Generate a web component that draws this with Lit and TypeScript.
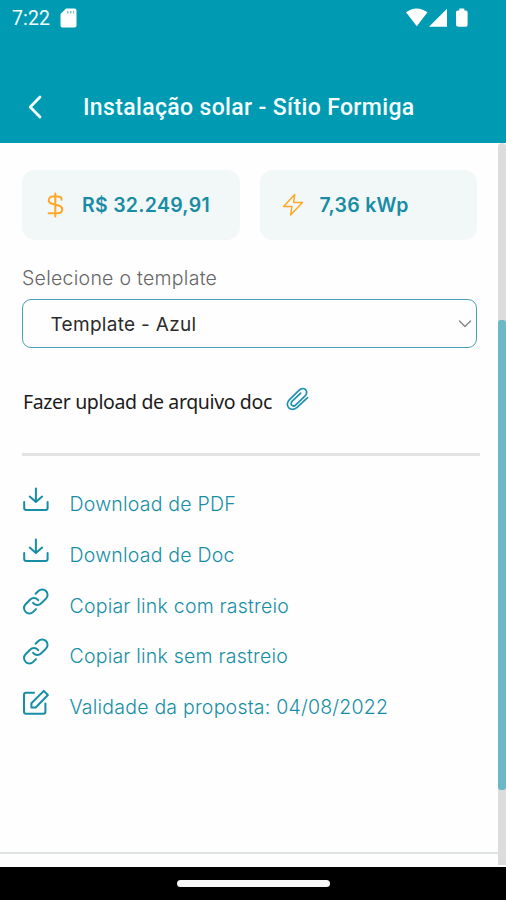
import { LitElement, html, css, svg } from "lit";
import { customElement } from "lit/decorators.js";

const download = svg`<path d="M1.200 15v6a2 2 0 0 0 2 2h19.400a2 2 0 0 0 2-2v-6M12.900 1.500v13.200M6.700 9.600l6.200 5.400 6.200-5.400"/>`;
const link = svg`<path d="M10.1 13.900a5.300 5.300 0 0 0 7.900.6l5-4.900a5.350 5.350 0 0 0-7.600-7.600l-2.800 2.800M15.200 11.100a5.300 5.300 0 0 0-7.900-.6l-4.700 4.800a5.350 5.350 0 0 0 7.600 7.600l2.800-2.800"/>`;
const edit = svg`<path d="M11 2.800H3a2 2 0 0 0-2 2v17a2 2 0 0 0 2 2h17.400a2 2 0 0 0 2-2v-8.400M8.400 13.200v4.300h4.300L24.900 5l-4.100-4.100z"/>`;

const actions = [
  { icon: download, label: "Download de PDF" },
  { icon: download, label: "Download de Doc" },
  { icon: link, label: "Copiar link com rastreio" },
  { icon: link, label: "Copiar link sem rastreio" },
  { icon: edit, label: "Validade da proposta: 04/08/2022" },
];

@customElement("app-root")
export class AppRoot extends LitElement {
  static styles = css`
    :host { display: flex; flex-direction: column; height: 900px; width: 506px; background: #fefefe; font-family: Inter, sans-serif; overflow: hidden; }
    * { box-sizing: border-box; }
    svg { display: block; flex: none; fill: none; stroke: currentColor; stroke-linecap: round; stroke-linejoin: round; overflow: visible; }
    header { flex: none; height: 143px; background: #009bb3; color: #f5ffff; font-family: Roboto, sans-serif; }
    .status { height: 36px; padding: 0 38px 0 12px; display: flex; align-items: center; }
    .time { font-size: 19.5px; width: 48px; letter-spacing: 0.1px; }
    .status svg { fill: #fff; stroke: none; }
    .signals { margin-left: auto; }
    .bar { height: 70px; margin-top: 36px; padding-left: 27px; display: flex; align-items: center; }
    .title { font-size: 23px; font-weight: 500; margin-left: 39px; white-space: nowrap; letter-spacing: 0.35px; }
    .body { flex: 1; display: flex; min-height: 0; }
    main { flex: 1; padding: 27px 0 0 22px; display: flex; flex-direction: column; white-space: nowrap; }
    .cards { display: flex; gap: 20px; }
    .card { width: 217.5px; height: 70px; border-radius: 13px; background: #f2f7f8; display: flex; align-items: center; padding-left: 22px; color: #ffa726; }
    .value { margin-left: 16px; color: #188ca4; font-weight: 600; font-size: 19.5px; letter-spacing: 0.28px; }
    .label { margin-top: 26px; line-height: 24px; font-size: 19.5px; color: #666; font-weight: 300; letter-spacing: 0.27px; }
    .select { margin-top: 9px; width: 455px; height: 49px; border: 1.5px solid #4b9fb5; border-radius: 9px; display: flex; align-items: center; justify-content: space-between; padding: 1px 4px 0 27.5px; font-size: 19px; letter-spacing: 0.3px; color: #2b2b2b; }
    .select svg { color: #888; }
    .upload { margin-top: 36px; height: 34px; display: flex; align-items: center; color: #1b1b1b; font: 19.5px "Noto Sans", sans-serif; letter-spacing: -0.37px; padding-left: 1px; }
    .upload svg { color: #1f91ad; margin: -5px 0 0 14px; }
    .rule { width: 458px; height: 3px; background: #e3e3e3; margin-top: 35px; }
    .list { margin-top: 23px; display: flex; flex-direction: column; }
    .row { height: 50.7px; display: flex; align-items: center; color: #168ea5; font-size: 19.5px; font-weight: 300; letter-spacing: 0.22px; }
    .row svg { margin: -8px 20.5px 0 1px; }
    .foot { margin: auto 0 13px -22px; height: 2px; background: #e0e3e3; }
    .track { width: 8px; height: 722px; background: #dcdcdc; padding-top: 177px; border-radius: 4px 4px 0 0; }
    .thumb { height: 470px; border-radius: 3px; background: #6bb8c8; }
    .nav { flex: none; height: 33px; background: #000; display: flex; justify-content: center; padding-top: 13px; }
    .pill { width: 153px; height: 7px; border-radius: 4px; background: #f8f8f8; }
  `;

  render() {
    return html`
      <header>
        <div class="status">
          <span class="time">7:22</span>
          <svg width="17" height="20" viewBox="0 0 17 20"><path d="M6 .5h8.500a2 2 0 0 1 2 2v15a2 2 0 0 1-2 2h-12a2 2 0 0 1-2-2V6z"/><path d="M7 3h1.500v2.500H7zm3 0h1.500v2.500H10zm3 0h1.200v2.500H13z" fill="#7fc5d2"/></svg>
          <div class="signals">
            <svg width="62" height="20" viewBox="0 0 62 20"><path d="M0 4.300Q10.500-3.500 21.500 4.300L10.800 18.200zM23 18.700 41 .8v17.900zM50 4.200q0-1.800 1.700-1.800h1.600V.4h5v2h1.600q1.700 0 1.700 1.800v12.700q0 1.800-1.700 1.800h-7.200Q50 18.700 50 16.900z"/></svg>
          </div>
        </div>
        <div class="bar">
          <svg width="17" height="26" viewBox="0 0 17 26" stroke-width="2.8"><path d="M13 3 3.200 13 13 23"/></svg>
          <span class="title">Instalação solar - Sítio Formiga</span>
        </div>
      </header>
      <div class="body">
        <main>
          <div class="cards">
            <div class="card">
              <svg width="22" height="26" viewBox="0 0 22 26" stroke-width="2"><path d="M11.300 1.500v23M17.600 7.700c0-2-1.700-3.100-3.800-3.100H8.600c-2.200 0-3.900 1.500-3.900 3.700 0 2.100 1.300 3 3.300 3.500l6.600 1.700c2.200.6 3.600 1.700 3.600 3.800 0 2.400-1.800 3.900-4.200 3.900H4.600"/></svg>
              <span class="value">R$ 32.249,91</span>
            </div>
            <div class="card">
              <svg width="22" height="24" viewBox="0 0 22 24" stroke-width="1.500"><path d="M12.700 1.500 1.600 13.500h8.300l-1.300 8.600L20.500 9.400h-8.800z"/></svg>
              <span class="value">7,36 kWp</span>
            </div>
          </div>
          <div class="label">Selecione o template</div>
          <div class="select"><span>Template - Azul</span><svg width="14" height="8" viewBox="0 0 14 8" stroke-width="1.500"><path d="m1.500 1 5.500 5.500L12.500 1"/></svg></div>
          <div class="upload"><span>Fazer upload de arquivo doc</span>
            <svg width="23" height="24" viewBox="0 0 23 24" stroke-width="1.700"><path d="M21.600 10.600 11.100 20.400c-2.700 2.500-6.300 2.500-8.300.5-2.100-2.100-2-5.600.5-8.100L13.200 3.200c2-1.900 4.700-2.100 6.300-.6 1.700 1.600 1.500 4.300-.4 6.200l-9.300 9c-1.300 1.300-3 1.400-4 .4s-.9-2.700.4-4l8.500-8.100"/></svg>
          </div>
          <div class="rule"></div>
          <div class="list">
            ${actions.map((a) => html`<div class="row"><svg width="26" height="26" viewBox="0 0 26 26" stroke-width="2">${a.icon}</svg><span>${a.label}</span></div>`)}
          </div>
          <div class="foot"></div>
        </main>
        <div class="track"><div class="thumb"></div></div>
      </div>
      <div class="nav"><div class="pill"></div></div>
    `;
  }
}
